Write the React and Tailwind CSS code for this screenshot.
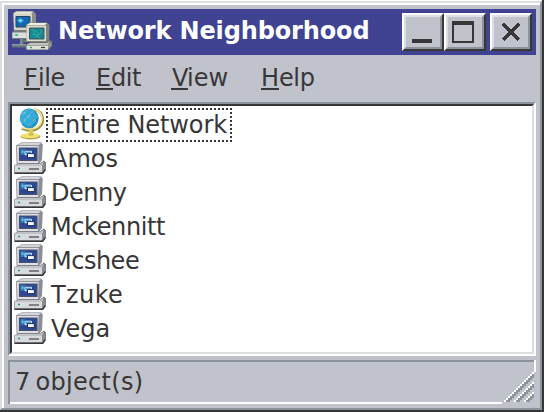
import React from "react";

const rows = [
  { name: "Amos", tracking: "" },
  { name: "Denny", tracking: "tracking-[-0.5px]" },
  { name: "Mckennitt", tracking: "tracking-[-0.4px]" },
  { name: "Mcshee", tracking: "tracking-[-0.5px]" },
  { name: "Tzuke", tracking: "tracking-[0.4px]" },
  { name: "Vega", tracking: "" },
];

function Computer() {
  return (
    <svg className="h-8 w-8 shrink-0" viewBox="0 0 32 32">
      <path d="M2.5 3 8 .3H27L28.8 2.5 28 18 25 22H4Z" fill="#8f929a" />
      <path d="M3 3.3 8.5 .8H27L24.8 3.3Z" fill="#d3d5da" />
      <path d="M25 3.6 28 1.8 27.3 18 25 21Z" fill="#8a8d96" />
      <path d="M2.5 3.5H25L24.5 21.5H3Z" fill="#dfe0e3" stroke="#8d9098" strokeWidth=".9" />
      <path d="M5.500 6H23V18.300H5.500Z" fill="#2c4793" stroke="#4a5270" strokeWidth="1.200" />
      <path d="M6.500 7H11V13H6.500Z" fill="#2b78b3" />
      <path d="M7.500 8.500h2v2.500H7.500z" fill="#5cc6e6" />
      <path d="M11 9.200h6.500v3.600h-6.500z" fill="#4f97cb" stroke="#d9edf8" strokeWidth=".9" />
      <path d="M13.500 11.600h6.800v4h-6.800z" fill="#fff" stroke="#1c2c60" strokeWidth="1" />
      <path d="M0 23.500 4 21.500H26L30 18.500 32 20.500V27L29 32H1L0 30Z" fill="#6b6e76" />
      <path d="M0 23.800 4 22H26L30.500 19.500 28 24H0Z" fill="#c0c2c7" />
      <path d="M.5 24H28V30.500H.5Z" fill="#d9dadd" />
      <path d="M28 24 31.700 20.500V27L28 31Z" fill="#8a8c93" />
      <path d="M.5 31.300H28.500L31.500 27.500" fill="none" stroke="#36383c" strokeWidth="1.400" />
      <path d="M4 26.500h2" stroke="#17a373" strokeWidth="1.600" />
      <path d="M15 27h10" stroke="#424348" strokeWidth="1.200" />
    </svg>
  );
}

function Globe() {
  return (
    <svg className="h-8 w-8 shrink-0" viewBox="0 0 32 32">
      <path d="M20.500 1.500C30.500 4 30.500 15 25 19.500Q18 25 8 20.500" fill="none" stroke="#a0943f" strokeWidth="2.800" />
      <path d="M20.500 1.200C29.500 4 29.500 14 24 18.500Q18 23 8.500 19.800" fill="none" stroke="#efe7a2" strokeWidth="1.600" />
      <path d="M15 21.500v5h4v-4.500" fill="#d8c951" />
      <ellipse cx="16.500" cy="28.500" rx="10" ry="3" fill="#b3a547" />
      <ellipse cx="16" cy="27.700" rx="9.300" ry="2.400" fill="#ede273" />
      <path d="M14 25.500h6l-1 2h-4z" fill="#c9b94a" />
      <ellipse cx="15.300" cy="10.400" rx="9.400" ry="9.900" fill="#1f8fb8" />
      <ellipse cx="14.300" cy="9.500" rx="8.200" ry="8.900" fill="#25aede" />
      <path d="M8 4Q15 11 23 14M12 1.500Q18 5 24 8.500M6.500 9Q12 14.500 18 19.500M20 2Q12 9 7 15M24 8Q18 13 13 20M15 1Q8 5 6 9" fill="none" stroke="#7f9fc4" strokeWidth=".9" />
      <path d="M9 6.500 11.500 4M13 10l3-3M10 13l2-2" stroke="#5bd0ee" strokeWidth="1.200" />
    </svg>
  );
}

function NetworkLogo() {
  return (
    <svg className="ml-1 h-10 w-10 shrink-0" viewBox="0 0 40 40">
      <path d="M10 26v8M0 35h14M10 30h5" fill="none" stroke="#65747b" strokeWidth="3" />
      <path d="M0 33.800h14M9 27v7" stroke="#a3afb1" strokeWidth="1" />
      <path d="M1 2 4 0H21L24 3V20H2Z" fill="#8b8e8d" />
      <path d="M2 2 5 .5H21L19 3H2Z" fill="#e4e3d5" />
      <path d="M1.500 3H20V19H2Z" fill="#d4d3c6" />
      <path d="M4 5.500H18V16H4Z" fill="#1666b2" stroke="#28445f" />
      <path d="M5.500 9.500h6M8.500 7v5" stroke="#37b4ee" strokeWidth="1.800" />
      <path d="M7.500 8.800h2v1.600h-2z" fill="#dafaff" />
      <path d="M0 21 3 19H19V28H0Z" fill="#777d7c" />
      <path d="M.5 21.500H18V27H.5Z" fill="#ddd" />
      <path d="M3 24h3" stroke="#16ac7d" strokeWidth="1.400" />
      <path d="M14 14 17.500 11.500H35L37.500 14 37 31H15Z" fill="#818580" />
      <path d="M14.500 14 18 12H35L33 14Z" fill="#eeeddf" />
      <path d="M14.500 14.500H34V30H14.500Z" fill="#dddccf" />
      <path d="M17.500 17H32V28H17.500Z" fill="#168b94" stroke="#425456" />
      <path d="M20 19q5 0 7 5M24 19q-4 5 2 7M29 18q1 5-5 7M20 23q5 0 8 4" fill="none" stroke="#2fa79f" />
      <path d="M14 34 18 31H34L37 28 40 30V35L37 39H15Z" fill="#666d6d" />
      <path d="M14 34 18 32H35L38 29.500 36 34Z" fill="#bfc3bc" />
      <path d="M14.500 34.500H36V38.500H14.500Z" fill="#e0dfd4" />
      <path d="M36 34 39.500 30.500V34.500L36 38Z" fill="#989b92" />
      <path d="M18 36.500h2" stroke="#22ae7b" strokeWidth="1.400" />
      <path d="M29 36.500h4" stroke="#303a3c" strokeWidth="1.200" />
    </svg>
  );
}

function WindowButton({ children }) {
  return (
    <button className="block h-[38px] w-[42px] border-2 border-t-white border-l-white border-r-[#383637] border-b-[#383637]">
      <span className="block h-[34px] w-[38px] border-2 border-t-[#dcdee4] border-l-[#dcdee4] border-r-[#8b949a] border-b-[#8b949a] bg-[#c0c3cb]">
        <svg className="h-[30px] w-[34px]" viewBox="0 0 34 30" shapeRendering="crispEdges">{children}</svg>
      </span>
    </button>
  );
}

function MenuItem({ first, rest, className, keyClass }) {
  return (
    <div className={"shrink-0 whitespace-nowrap leading-[28px] " + className}>
      <span className={"inline-block h-[26px] border-b-2 border-[#383637] " + keyClass}>{first}</span>
      {rest}
    </div>
  );
}

export default function App() {
  return (
    <div className="h-[412px] w-[545px] overflow-hidden bg-white font-['DejaVu_Sans',sans-serif] text-[24px] text-[#383637]">
      <div className="h-[412px] w-[544px] border-r-2 border-b-2 border-[#383637] pt-px">
        <div className="h-[409px] border-t-2 border-l-2 border-r-2 border-b-2 border-t-[#dcdee4] border-l-[#dcdee4] border-r-[#8b949a] border-b-[#8b949a]">
          <div className="flex h-[405px] flex-col border-t-2 border-l-2 border-white bg-[#c0c3cb] px-1 pt-1">
            <div className="flex h-[46px] w-[528px] shrink-0 bg-[#404292] text-white">
              <div className="pt-0.5"><NetworkLogo /></div>
              <div className="w-[342px] shrink-0 whitespace-nowrap pl-[6px] font-bold leading-[45px] tracking-[-0.14px]">Network Neighborhood</div>
              <div className="ml-auto flex pt-1 pr-1">
                <WindowButton><path d="M6 22h20v4H6z" fill="#383637" /></WindowButton>
                <WindowButton><path d="M4 4h22v22H4zM6 8v16h18V8z" fillRule="evenodd" fill="#383637" /></WindowButton>
                <div className="ml-1">
                  <WindowButton><path d="M9 7 25 23M25 7 9 23" stroke="#383637" strokeWidth="4" /></WindowButton>
                </div>
              </div>
            </div>
            <nav className="flex h-[47px] shrink-0 pt-[9px]">
              <MenuItem first="F" rest="ile" className="ml-4 w-[72px] tracking-[-0.4px]" keyClass="w-4 -mr-[2px]" />
              <MenuItem first="E" rest="dit" className="w-[75px] tracking-[-0.4px]" keyClass="w-[17px] -mr-[2px]" />
              <MenuItem first="V" rest="iew" className="w-[90px]" keyClass="w-[17px] pl-px -mr-[1px]" />
              <MenuItem first="H" rest="elp" className="w-[80px] tracking-[-0.4px]" keyClass="w-[18px]" />
            </nav>
            <div className="h-[254px] w-[528px] shrink-0 border-2 border-t-[#8b949a] border-l-[#8b949a] border-r-white border-b-white">
              <div className="h-[250px] border-2 border-t-[#383637] border-l-[#383637] border-r-[#dcdee4] border-b-[#dcdee4] bg-white pt-0.5 pl-0.5">
                <div className="flex h-[34px]">
                  <Globe />
                  <div className="h-[34px] w-[186px] whitespace-nowrap bg-[repeating-linear-gradient(90deg,#383637_0_2px,transparent_2px_4px),repeating-linear-gradient(90deg,#383637_0_2px,transparent_2px_4px),repeating-linear-gradient(180deg,#383637_0_2px,transparent_2px_4px),repeating-linear-gradient(180deg,#383637_0_2px,transparent_2px_4px)] [background-position:0_0,0_100%,0_0,100%_0] bg-no-repeat [background-size:100%_2px,100%_2px,2px_100%,2px_100%] pl-[4px] leading-[34px] tracking-[-0.1px]">Entire Network</div>
                </div>
                {rows.map(({ name, tracking }) => (
                  <div key={name} className="flex h-[34px] leading-[34px]">
                    <Computer />
                    <span className={"pl-[5px] " + tracking}>{name}</span>
                  </div>
                ))}
              </div>
            </div>
            <div className="mt-1 flex h-[44px] w-[528px] shrink-0 border-t-2 border-l-2 border-[#8b949a]">
              <div className="w-[492px] border-b-2 border-white pl-[5px] leading-[40px] tracking-[0.3px] [word-spacing:-3px]">7 object(s)</div>
              <svg className="h-[42px] w-[34px] overflow-visible" viewBox="0 0 34 42" shapeRendering="crispEdges">
                <path d="M32-2h2v12h-2z" fill="white" />
                {Array.from({ length: 15 }, (_, i) => {
                  const x = 30 - i * 2;
                  const y = 10 + i * 2;
                  return (
                    <g key={i}>
                      {[0, 10, 20].map((d) => y + d < 40 && <path key={d} d={`M${x} ${y + d}h2v2h-2z`} fill="white" />)}
                      {[2, 4, 12, 14, 22, 24].map((d) => y + d < 40 && <path key={d} d={`M${x} ${y + d}h2v2h-2z`} fill="#8b949a" />)}
                    </g>
                  );
                })}
              </svg>
            </div>
          </div>
        </div>
      </div>
    </div>
  );
}
